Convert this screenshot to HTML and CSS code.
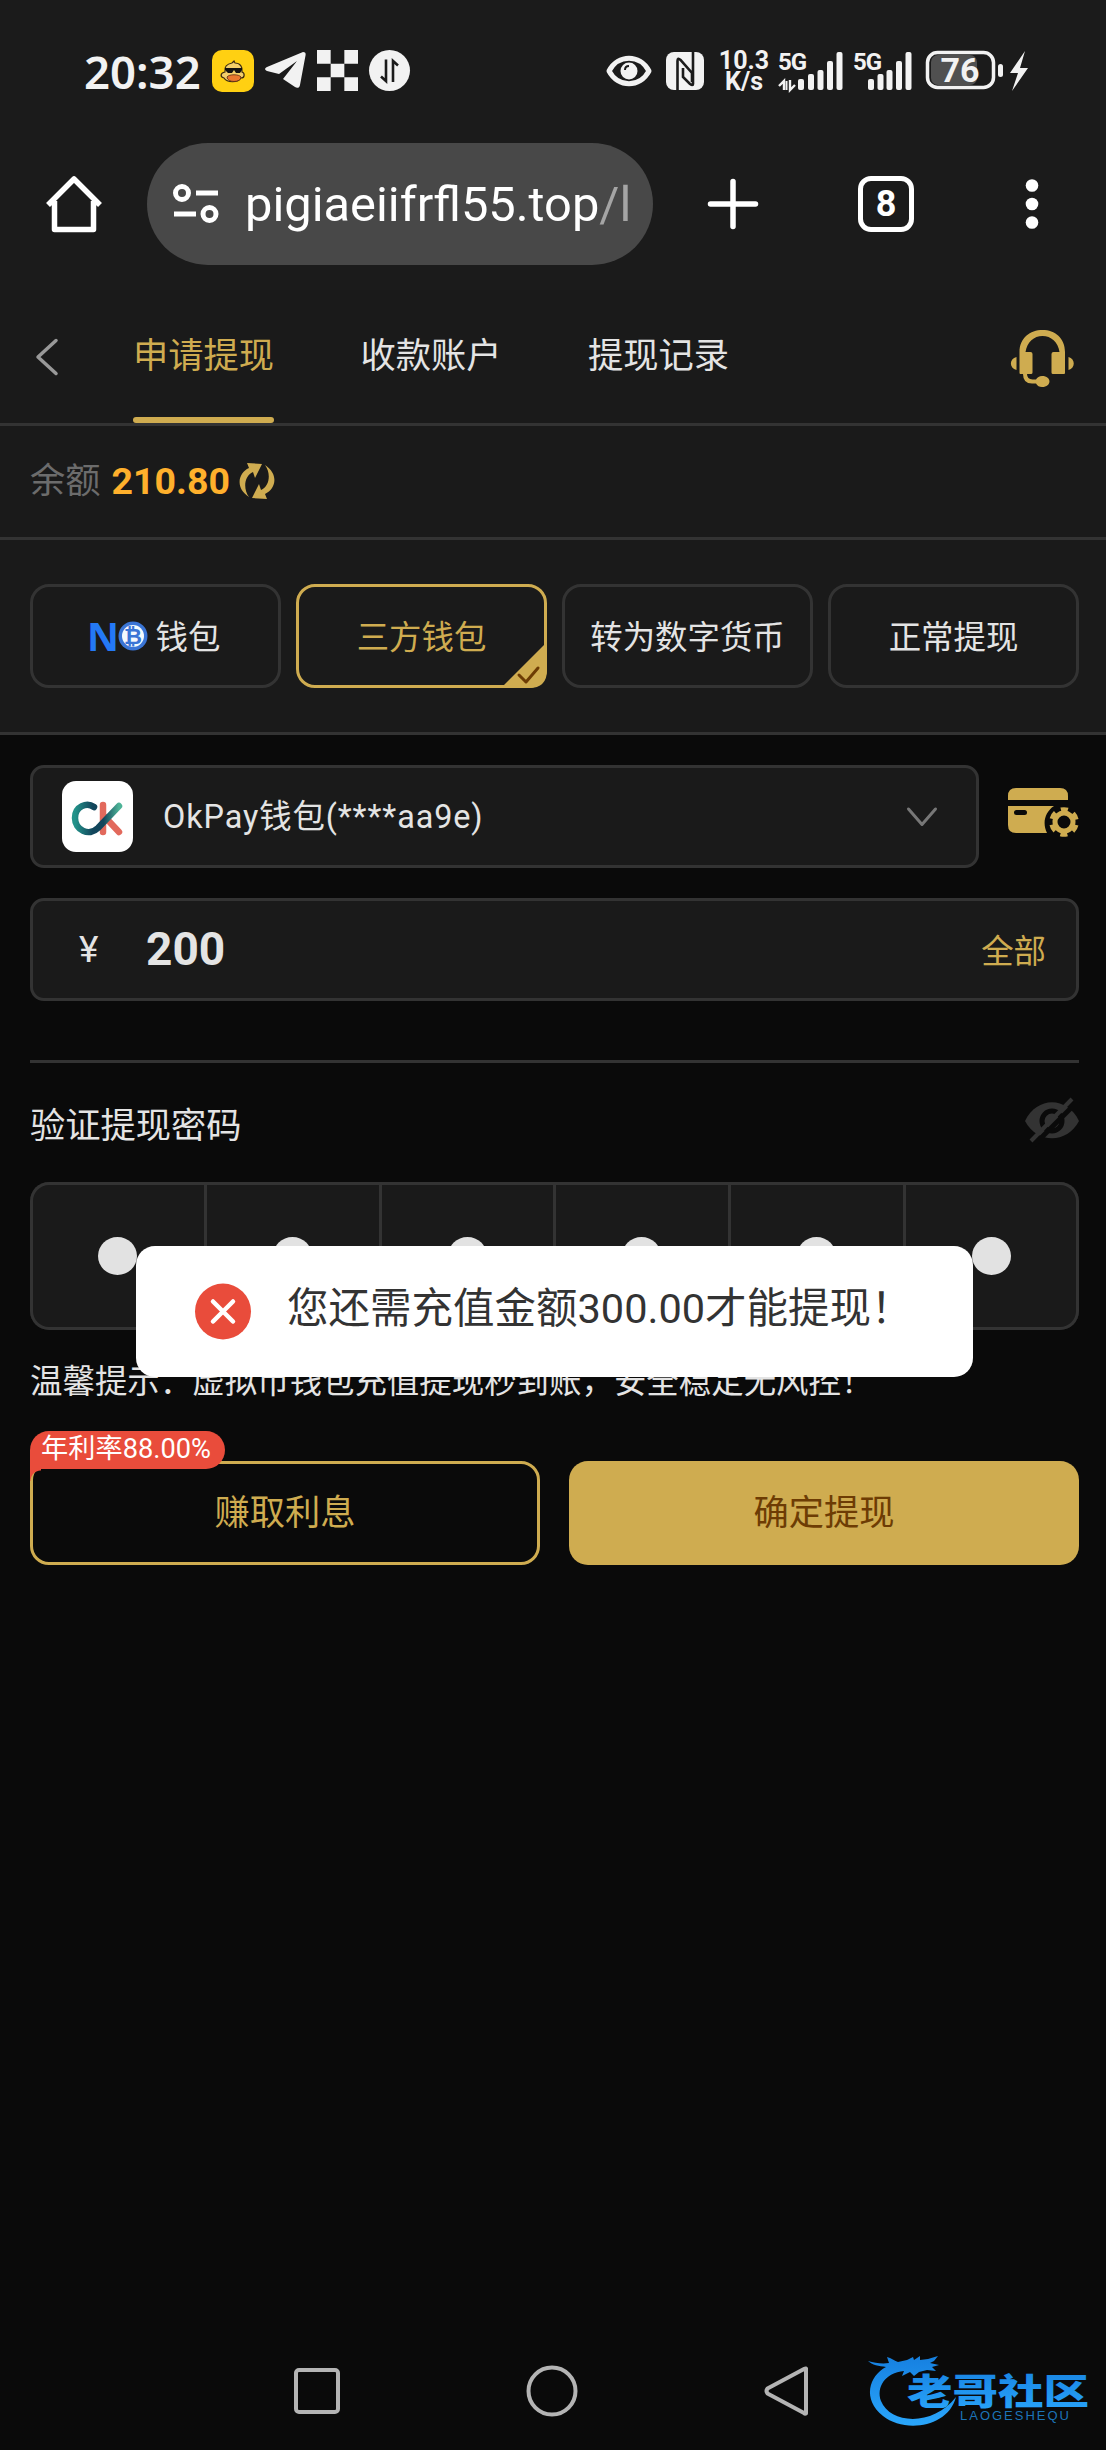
FILE: index.html
```html
<!DOCTYPE html>
<html lang="zh-CN">
<head>
<meta charset="utf-8">
<title>申请提现</title>
<link rel="stylesheet" href="styles.css">
</head>
<body>
<div class="screen">
  <header class="status">
    <span class="clock">20:32</span>
    <svg class="duck" width="42" height="42" viewBox="0 0 42 42"><rect width="42" height="42" rx="10" fill="#ffd012"/><path d="M13 22c-1-5 2-8 7-9l2-2 1 2c5 0 8 4 7 9 3 1 3 6-1 6-3 5-14 5-17 0-4-1-4-5 1-6z" fill="#f3cf6a" stroke="#3a2a10" stroke-width="1.2"/><path d="M15 27c2-3 12-3 14 0 0 6-14 6-14 0z" fill="#e8772e" stroke="#5a2a10" stroke-width=".8"/><path d="M13 18h17v2l-2 3h-4l-2-3-2 3h-4l-3-3z" fill="#111"/></svg>
    <svg class="plane" width="41" height="37" viewBox="0 0 41 37"><path d="M38 0c2 0 3 1 2.600 3L35 33c-.5 3-3 3.500-5 2L18 27 32 9 14 22 2 19c-2.500-1-2.500-3 0-4z" fill="#f2f2f2"/></svg>
    <svg class="checker" width="41" height="41" viewBox="0 0 3 3"><path d="M0 0h1v1H0zM2 0h1v1H2zM1 1h1v1H1zM0 2h1v1H0zM2 2h1v1H2z" fill="#f2f2f2"/></svg>
    <svg width="41" height="41" viewBox="0 0 41 41"><circle cx="20.500" cy="20.500" r="20.500" fill="#f2f2f2"/><path d="M17 9.500V31l-5-4.500M24 32V11l5 4.500" fill="none" stroke="#1b1b1b" stroke-width="2.600"/></svg>
    <span class="grow"></span>
    <svg class="eye" width="46" height="32" viewBox="0 0 46 32"><path d="M3 16C12-1 34-1 43 16 34 33 12 33 3 16z" fill="none" stroke="#f2f2f2" stroke-width="5" stroke-linejoin="round"/><circle cx="23" cy="16" r="8.500" fill="#f2f2f2"/><path d="M19 15c0-3 2-4 4-4" fill="none" stroke="#1b1b1b" stroke-width="2"/></svg>
    <svg class="nfc" width="38" height="38" viewBox="0 0 38 38"><rect width="38" height="38" rx="8" fill="#f2f2f2"/><path d="M11.500 38V9q0-4 3-1L26 21v9M27 0v32q0 2-3 0L17 25V16" fill="none" stroke="#1b1b1b" stroke-width="2.600"/></svg>
    <span class="rate"><span>10.3</span><span>K/s</span></span>
    <svg class="sig" width="64" height="40" viewBox="0 0 64 40"><text class="g5" x="-1" y="19">5G</text><path d="M0 35 5 30V39M11 29v10l5-5" fill="none" stroke="#f2f2f2" stroke-width="2.400"/><path d="M7.500 30v9" stroke="#f2f2f2" stroke-width="2"/><g fill="#f2f2f2"><rect x="19" y="28" width="6" height="11" rx="2"/><rect x="29" y="23" width="6" height="16" rx="2"/><rect x="38.500" y="19" width="6" height="20" rx="2"/><rect x="48" y="10" width="6" height="29" rx="2"/><rect x="57.500" y="1" width="6" height="38" rx="2"/></g></svg>
    <svg class="sig2" width="58" height="40" viewBox="0 0 58 40"><text class="g5" x="-1" y="19">5G</text><g fill="#f2f2f2"><rect x="14" y="28" width="6" height="11" rx="2"/><rect x="23.500" y="23" width="6" height="16" rx="2"/><rect x="32.500" y="19" width="6" height="20" rx="2"/><rect x="42" y="10" width="6" height="29" rx="2"/><rect x="51.500" y="1" width="6" height="38" rx="2"/></g></svg>
    <svg width="102" height="42" viewBox="0 0 102 42"><rect x="5" y="5" width="46" height="30" rx="7" fill="#505050"/><rect x="1.500" y="2.500" width="66" height="35" rx="10" fill="none" stroke="#f2f2f2" stroke-width="3.500"/><rect x="72" y="14" width="5" height="13" rx="2.500" fill="#f2f2f2"/><text class="bat" x="34" y="32" text-anchor="middle">76</text><path d="M99 1 84 23h8l-6 18 16-23h-8z" fill="#f2f2f2"/></svg>
  </header>

  <div class="browser">
    <svg class="home" width="60" height="60" viewBox="0 0 60 60"><path d="M4 31 30 5l26 26M10.500 27v28.500h39V27" fill="none" stroke="#fff" stroke-width="5.500" stroke-linejoin="round"/></svg>
    <div class="url">
      <svg width="46" height="40" viewBox="0 0 46 40"><g fill="none" stroke="#fff" stroke-width="5"><circle cx="9" cy="9" r="6.500"/><path d="M23 9h22M1 30h22"/><circle cx="36.500" cy="30" r="6.500"/></g></svg>
      <span class="addr">pigiaeiifrfl55.top<i>/l</i></span>
    </div>
    <svg class="plus" width="50" height="50" viewBox="0 0 50 50"><path d="M25 2.500v45M2.500 25h45" stroke="#fff" stroke-width="5.500" stroke-linecap="round"/></svg>
    <span class="tabs-count">8</span>
    <svg class="dots" width="14" height="52" viewBox="0 0 14 52"><g fill="#fff"><circle cx="7" cy="7.500" r="6.300"/><circle cx="7" cy="26" r="6.300"/><circle cx="7" cy="44.500" r="6.300"/></g></svg>
  </div>

  <nav class="head">
    <svg class="back" width="24" height="38" viewBox="0 0 24 38"><path d="M21 2.500 3 19l18 16.500" fill="none" stroke="#999" stroke-width="3.500" stroke-linecap="round" stroke-linejoin="round"/></svg>
    <a class="tab on">申请提现</a><a class="tab">收款账户</a><a class="tab">提现记录</a>
    <svg class="service" width="63" height="57" viewBox="0 0 63 57"><g fill="#cfac50"><path d="M8.500 43V22C8.500 8 19 0 31.500 0S54 8 54 22v21q0 1-1 1H42q-1.500 0-1.500-1.500V24q0-2 2-2h6C47 12 40 6 31.500 6S16 12 14.500 22h5q2 0 2 2v18.500q0 1.500-1.500 1.500h-4q0 5 5.500 5.500H25q2-3.500 6-3.500c10 0 10 11 0 11q-4 0-6-3.500h-4q-9 0-9-9.500H9.500q-1 0-1-1z"/><path d="M5.500 27v13C-2 38-2 29 5.500 27zM57.500 27v13c7-2 7-11 0-13z"/></g></svg>
  </nav>

  <div class="balance">
    <span class="muted">余额</span><b>210.80</b>
    <svg width="36" height="38" viewBox="0 0 36 38"><g fill="#cfac50"><path d="M8 1 23 2l-7 14-2-6C5 14 4 27 10 35-4 26-1 11 10 6z"/><path d="M28 37 13 36l7-14 2 6C31 24 32 11 26 3 40 12 37 27 26 32z"/></g></svg>
  </div>

  <div class="methods">
    <div class="method"><svg class="no" width="60" height="32" viewBox="0 0 60 32"><text class="no-n" x="-2" y="30.500" textLength="32" lengthAdjust="spacingAndGlyphs">N</text><circle cx="44" cy="16" r="14.500" fill="#3a75d6"/><circle cx="44" cy="16" r="11" fill="#f4fafe"/><text class="no-b" x="44" y="24" text-anchor="middle">₿</text></svg><span>钱包</span></div>
    <div class="method on"><span>三方钱包</span><svg class="tick" width="46" height="46" viewBox="0 0 46 46"><path d="M46 0v28q0 18-18 18H0z" fill="#cfac50"/><path d="m18 33 7 7 12-14" fill="none" stroke="#6d3c04" stroke-width="3" stroke-linecap="round" stroke-linejoin="round"/></svg></div>
    <div class="method"><span>转为数字货币</span></div>
    <div class="method"><span>正常提现</span></div>
  </div>

  <main class="form">
    <div class="account">
      <div class="select">
        <span class="logo"><svg width="71" height="71" viewBox="0 0 71 71"><defs><linearGradient id="t" x1="0" x2="1"><stop stop-color="#23938a"/><stop offset=".4" stop-color="#12465c"/><stop offset=".65" stop-color="#12465c"/><stop offset="1" stop-color="#4db397"/></linearGradient></defs><g fill="none" stroke-width="6.500" stroke-linecap="round"><path d="M41 24v27M42 35 57 51" stroke="#e2695c"/><path d="M32 26C25 21 13 25 13 37s14 19 23 10L57 25" stroke="url(#t)"/></g></svg></span>
        <span class="acct">OkPay钱包(****aa9e)</span>
        <svg width="32" height="22" viewBox="0 0 32 22"><path d="m2.500 3 13.500 15.500L29.500 3" fill="none" stroke="#777" stroke-width="3" stroke-linecap="round" stroke-linejoin="round"/></svg>
      </div>
      <svg class="card" width="71" height="50" viewBox="0 0 71 50"><path d="M0 12V8q0-8 8-8h44q8 0 8 8v4zM0 18h46c-9 6-12 17-7 27H8q-8 0-8-8z" fill="#cfac50"/><rect x="6" y="22" width="13" height="5" rx="2.500" fill="#0a0a0a"/><circle cx="56" cy="34" r="9" fill="none" stroke="#cfac50" stroke-width="5"/><circle cx="56" cy="34" r="12.600" fill="none" stroke="#cfac50" stroke-width="4.500" stroke-dasharray="7 6.194" stroke-dashoffset="-3.100"/></svg>
    </div>
    <div class="amount"><span class="yen">¥</span><b>200</b><a>全部</a></div>
    <hr>
    <div class="pwd-head"><span>验证提现密码</span>
      <svg width="54" height="46" viewBox="0 0 54 46"><path d="M0 24C12-1 42-1 54 24 42 47 12 47 0 24z" fill="#333"/><circle cx="27" cy="24" r="10" fill="none" stroke="#0a0a0a" stroke-width="5"/><path d="M9 48 53 4" stroke="#0a0a0a" stroke-width="5"/><path d="M6 44 47 2" stroke="#333" stroke-width="4"/></svg>
    </div>
    <div class="pwd"><span></span><span></span><span></span><span></span><span></span><span></span></div>
    <p class="tip">温馨提示：虚拟币钱包充值提现秒到账，安全稳定无风控！</p>
    <div class="actions">
      <div class="btn line">赚取利息<span class="badge">年利率88.00%</span></div>
      <div class="btn solid">确定提现</div>
    </div>
  </main>

  <footer class="sysnav">
    <svg width="46" height="46" viewBox="0 0 46 46"><rect x="2" y="2" width="42" height="42" rx="3" fill="none" stroke="#b4b4b4" stroke-width="4"/></svg>
    <svg width="52" height="52" viewBox="0 0 52 52"><circle cx="26" cy="26" r="23.500" fill="none" stroke="#b4b4b4" stroke-width="4"/></svg>
    <svg width="46" height="52" viewBox="0 0 46 52"><path d="M42 3.500v45Q41 49 40 48L3.500 28.500q-2-2.500 0-5L40 4z" fill="none" stroke="#b4b4b4" stroke-width="4" stroke-linejoin="round"/></svg>
  </footer>

  <div class="toast">
    <svg width="56" height="57" viewBox="0 0 56 56"><circle cx="28" cy="28" r="28" fill="#e94c3b"/><path d="m18 18 20 20m0-20L18 38" stroke="#fff" stroke-width="4.500" stroke-linecap="round"/></svg>
    <span>您还需充值金额300.00才能提现！</span>
  </div>

  <svg class="mark" width="226" height="76" viewBox="0 0 226 76">
    <defs><linearGradient id="w" x2="0" y2="1"><stop stop-color="#1680e0"/><stop offset="1" stop-color="#2aa6fb"/></linearGradient></defs>
    <path d="M0 8c7 2 14 3 21 2l-2-6c4 1 8 4 11 5l9-2 6-3 1 3 6-4v4l8-1 10-3-4 5-4 2 9 2-7 2 4 4-9-1-8 2-5 4-4-4-8 4 2-5C17 20 8 34 13 48c9 23 52 26 75-4C80 75 36 80 15 63-6 46 1 23 18 14 11 13 4 12 0 8z" fill="url(#w)"/>
    <text class="mark-cn" x="39" y="52" textLength="182" lengthAdjust="spacingAndGlyphs">老哥社区</text>
    <text class="mark-en" x="92" y="67" textLength="109">LAOGESHEQU</text>
  </svg>
</div>
</body>
</html>
```
FILE: styles.css
```css
* { box-sizing: border-box; }
body { margin: 0; background: #0a0a0a; color: #e4e4e4; font-family: Roboto, "Noto Sans CJK SC", sans-serif; }
svg { display: block; flex: none; overflow: visible; }
.screen { position: relative; width: 1106px; height: 2450px; display: flex; flex-direction: column; background: #0a0a0a; overflow: hidden; }

.status { height: 128px; padding: 13px 78px 0 84px; display: flex; align-items: center; background: #1b1b1b; color: #f2f2f2; }
.clock { width: 128px; font: 600 45.5px/60px "Noto Sans", sans-serif; white-space: nowrap; }
.plane { margin-left: 11px; }
.checker { margin: 0 11px; }
.grow { flex: 1; }
.nfc { margin: 0 15px 0 14px; }
.rate { width: 50px; display: flex; flex-direction: column; align-items: center; font: 700 25px/21px Roboto, sans-serif; white-space: nowrap; }
.sig { margin: 0 11px 0 10px; }
.sig2 { margin-right: 14px; }
.g5 { font: 700 24px Roboto, sans-serif; fill: #f2f2f2; letter-spacing: -1px; }
.bat { font: 700 34px Roboto, sans-serif; fill: #f2f2f2; }

.browser { height: 162px; padding: 14px 0 24px 44px; display: flex; align-items: center; background: #1b1b1b; }
.url { margin-left: 43px; width: 506px; height: 122px; border-radius: 61px; padding: 0 25px 0 26px; display: flex; align-items: center; gap: 26px; background: #484848; color: #fff; overflow: hidden; }
.addr { width: 383px; padding-top: 2px; overflow: hidden; white-space: nowrap; font: 400 48.8px/70px Roboto, sans-serif; }
.addr i { font-style: normal; color: #a5a5a5; }
.plus { margin-left: 55px; }
.tabs-count { margin-left: 100px; width: 56px; height: 56px; border: 5px solid #fff; border-radius: 13px; font: 700 36px/46px Roboto, sans-serif; text-align: center; color: #fff; }
.dots { margin-left: 111px; }

.head { height: 136px; padding: 0 32px 0 35px; border-bottom: 3px solid #333; display: flex; align-items: stretch; background: #1a1a1a; }
.back { margin-top: 48px; }
.tab { position: relative; height: 133px; font-size: 35.25px; line-height: 132px; margin-left: 86.5px; }
.back + .tab { margin-left: 74px; }
.tab.on { color: #cfac50; }
.tab.on::after { content: ""; position: absolute; left: 0; right: 0; bottom: 0; height: 6px; border-radius: 3px; background: #cfac50; }
.service { margin: 40px 0 0 auto; }

.balance { height: 114px; padding: 0 30px 2px; border-bottom: 3px solid #333; display: flex; align-items: center; background: #1a1a1a; font-size: 35.25px; line-height: 50px; }
.muted { color: #6c6c6c; }
.balance b { margin: 0 10px 0 11px; width: 117px; font-size: 37.5px; color: #ffb02c; white-space: nowrap; }

.methods { height: 195px; padding: 44px 27px 0 30px; border-bottom: 3px solid #333; background: #1a1a1a; display: grid; grid-template-columns: repeat(4, 1fr); column-gap: 15px; }
.method { position: relative; height: 104px; border: 3px solid #333; border-radius: 19px; display: flex; align-items: center; justify-content: center; gap: 7px; padding-top: 3px; font-size: 32.4px; line-height: 48px; white-space: nowrap; }
.method:first-child { padding-right: 2px; }
.method.on { border-color: #cfac50; color: #cfac50; }
.no { margin-bottom: 4px; }
.tick { position: absolute; right: -3px; bottom: -3px; }
.no-n { font: 700 39px "Open Sans", sans-serif; fill: #2479f5; }
.no-b { font: 700 22px "DejaVu Sans", sans-serif; fill: #3a75d6; }

.form { padding: 30px 27px 0 30px; display: flex; flex-direction: column; }
.account { display: flex; align-items: center; justify-content: space-between; height: 103px; }
.select { width: 949px; height: 103px; padding: 0 38px 0 29px; border: 3px solid #333; border-radius: 14px; background: #1a1a1a; display: flex; align-items: center; }
.logo { width: 71px; height: 71px; border-radius: 14px; background: #fff; overflow: hidden; }
.acct { flex: 1; padding-left: 30px; font-size: 32.4px; line-height: 48px; letter-spacing: .9px; }
.card { margin-bottom: 8px; }
.amount { margin-top: 30px; height: 103px; padding: 0 30px 0 46px; border: 3px solid #333; border-radius: 14px; background: #1a1a1a; display: flex; align-items: center; }
.yen { width: 67px; font-size: 37px; }
.amount b { flex: 1; font-size: 46px; padding-bottom: 2px; }
.amount a { font-size: 32.4px; color: #cfac50; padding-bottom: 3px; }
hr { margin: 59px 0 0; width: 100%; height: 3px; border: 0; background: #333; }
.pwd-head { height: 119px; display: flex; justify-content: space-between; align-items: center; font-size: 35.25px; line-height: 50px; padding-top: 7px; }
.pwd-head svg { margin-bottom: 12px; }
.pwd { height: 148px; border-radius: 19px; box-shadow: inset 0 0 0 3px #333; background: #1a1a1a; display: grid; grid-template-columns: repeat(6, 1fr); }
.pwd span { display: flex; align-items: center; justify-content: center; box-shadow: inset 2px 0 #333, -1px 0 #333; }
.pwd span:first-child { box-shadow: none; }
.pwd span::after { content: ""; width: 39px; height: 38px; border-radius: 50%; background: #e2e2e2; }
.tip { margin: 28px 0 0; font-size: 32.45px; line-height: 48px; white-space: nowrap; }
.actions { margin-top: 55px; display: grid; grid-template-columns: 1fr 1fr; column-gap: 29px; }
.btn { position: relative; height: 104px; border-radius: 19px; display: flex; align-items: center; justify-content: center; font-size: 35.25px; line-height: 50px; }
.line { border: 3px solid #cfac50; color: #cfac50; }
.solid { background: #cfac50; color: #6d3c04; }
.badge { position: absolute; left: -3px; top: -33px; width: 195px; height: 38px; padding-right: 3px; border-radius: 19px 19px 19px 0; background: #e94c3b; color: #fff; font-size: 27.2px; line-height: 36px; text-align: center; white-space: nowrap; }
.badge::after { content: ""; position: absolute; left: 0; top: 38px; width: 11px; height: 12px; background: radial-gradient(circle at 100% 100%, transparent 10px, #e94c3b 11px); }

.sysnav { margin-top: auto; height: 119px; padding: 0 296px 0 294px; display: flex; align-items: center; justify-content: space-between; }

.toast { position: absolute; left: 136px; top: 1246px; width: 837px; height: 131px; border-radius: 19px; background: #fff; color: #333; display: flex; align-items: center; padding-left: 59px; gap: 36px; font-size: 41.5px; line-height: 60px; white-space: nowrap; }
.toast span { padding-bottom: 5px; }
.mark { position: absolute; left: 868px; top: 2353px; }
.mark-cn { font: 900 36px "Noto Sans CJK SC", sans-serif; fill: url(#w); }
.mark-en { font: 400 13px "Liberation Sans", sans-serif; fill: #1c74b8; }
```
